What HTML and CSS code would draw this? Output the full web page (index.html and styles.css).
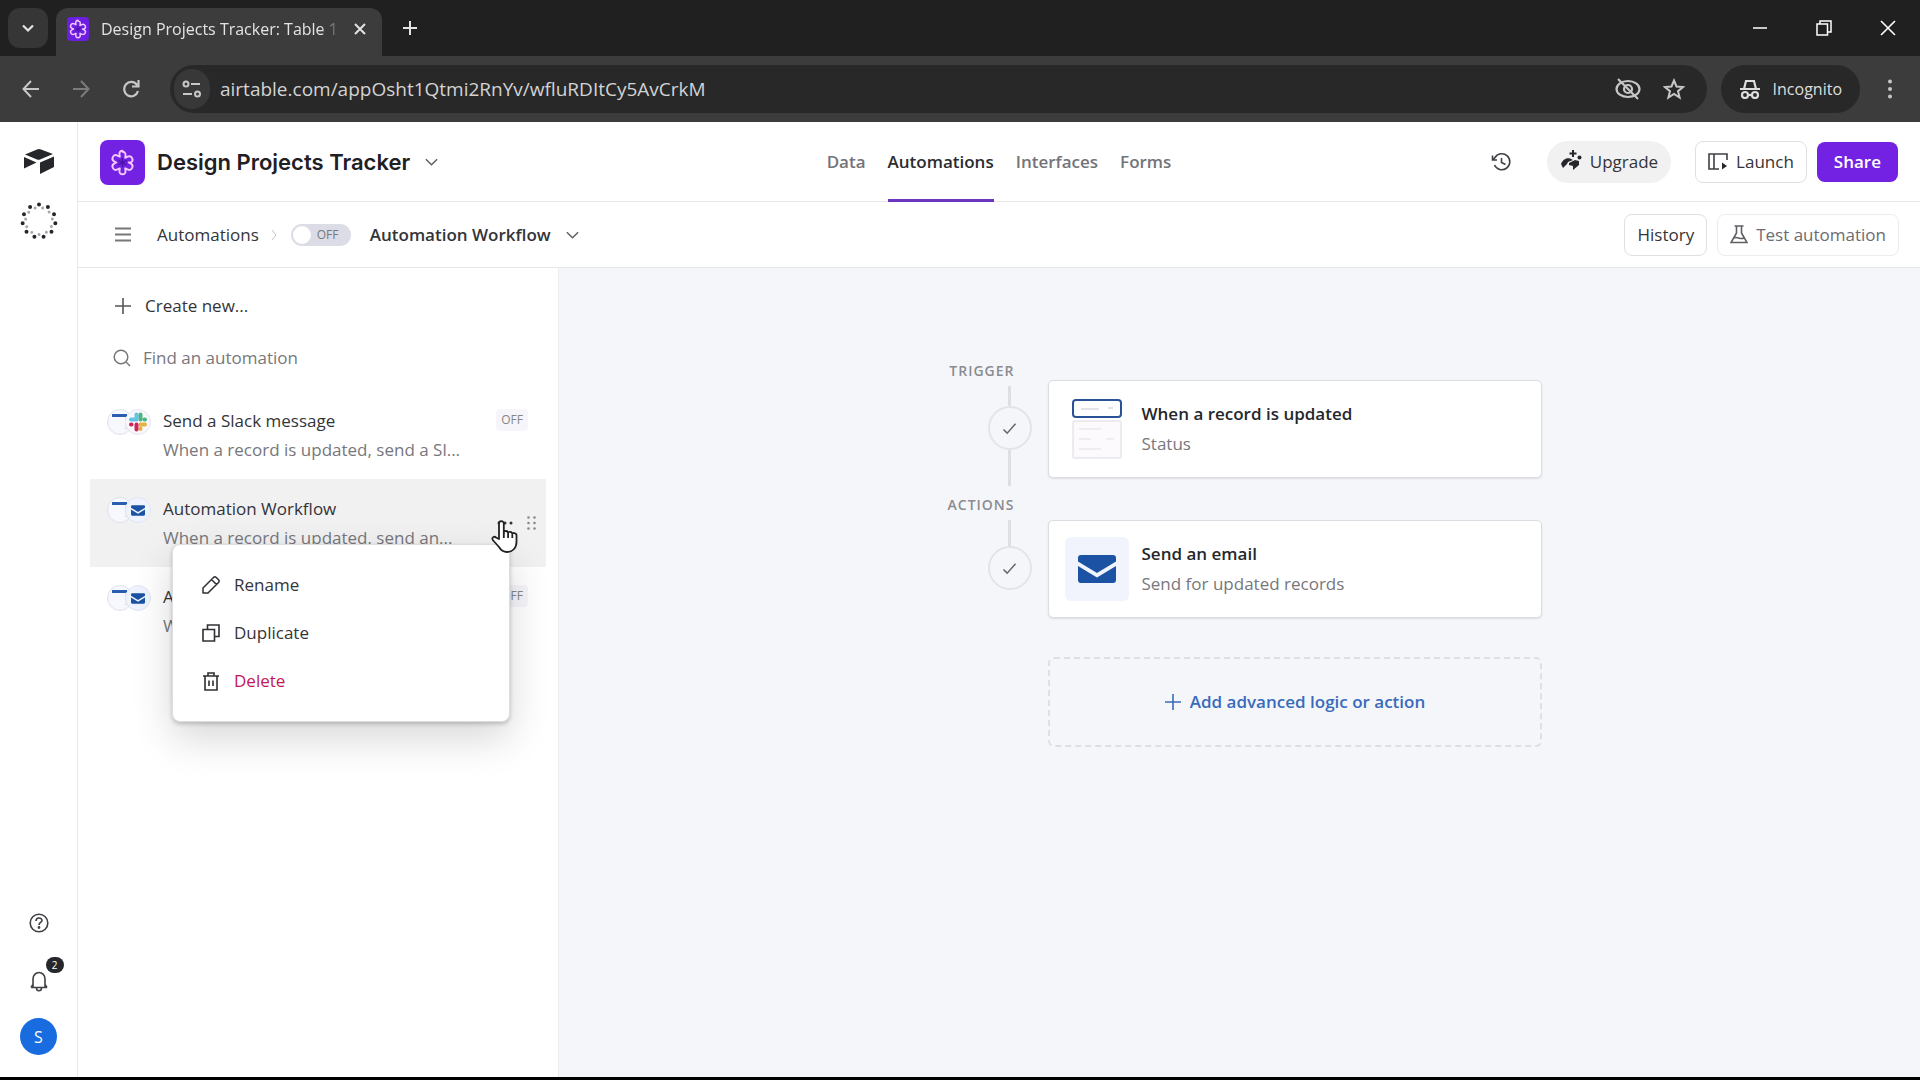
FILE: index.html
```html
<!DOCTYPE html>
<html lang="en">
<head>
    <meta charset="utf-8">
    <title>Design Projects Tracker: Table 1</title>
    <link rel="stylesheet" href="styles.css">
</head>
<body>
    <!-- Icons used more than once -->
    <svg class="sprite" aria-hidden="true">
        <symbol id="flower" viewBox="0 0 24 24">
            <path d="M12 2.500c1.800 0 2.900 1.300 2.700 3l-.3 2.300 2.100-1c1.600-.7 3.200-.2 4 1.200s.4 3.100-1 4L17.500 12l2 1c1.400.9 1.800 2.600 1 4s-2.400 1.900-4 1.200l-2.100-1 .3 2.300c.2 1.700-.9 3-2.700 3s-2.900-1.300-2.700-3l.3-2.300-2.100 1c-1.600.7-3.200.2-4-1.200s-.4-3.100 1-4l2-1-2-1c-1.400-.9-1.800-2.600-1-4s2.400-1.900 4-1.200l2.100 1-.3-2.300c-.2-1.700.9-3 2.700-3z" fill="none" stroke="#f3c9ff" stroke-width="1.700" stroke-linejoin="round"/>
            <path d="M12 8v8M8.500 10l7 4M15.500 10l-7 4" stroke="#4a12a8" stroke-width="1.200" fill="none"/>
        </symbol>
        <symbol id="chevron" viewBox="0 0 16 10">
            <path d="M2 2l6 6 6-6" fill="none" stroke="currentColor" stroke-width="1.600"/>
        </symbol>
        <symbol id="plus" viewBox="0 0 18 18">
            <path d="M9 1v16M1 9h16" fill="none" stroke="currentColor" stroke-width="1.600"/>
        </symbol>
        <symbol id="envelope" viewBox="0 0 38 28">
            <path d="M3 0h32a3 3 0 0 1 3 3v3.500L19 18 0 6.500V3a3 3 0 0 1 3-3z" fill="#1b52a4"/>
            <path d="M0 11l19 11.500L38 11v14a3 3 0 0 1-3 3H3a3 3 0 0 1-3-3z" fill="#1b52a4"/>
        </symbol>
        <symbol id="check" viewBox="0 0 16 14">
            <path d="M1.500 8l4 4 9-10" fill="none" stroke="currentColor" stroke-width="1.600"/>
        </symbol>
        <symbol id="record" viewBox="0 0 26 26">
            <circle cx="13" cy="13" r="12.500" fill="#f7f8fd" stroke="#e0e1ea"/>
            <path d="M5 5h15v3H5z" fill="#2a5db0"/>
            <path d="M19 8v13" stroke="#d5daea"/>
        </symbol>
        <symbol id="mail" viewBox="0 0 26 26">
            <circle cx="13" cy="13" r="12.500" fill="#eef3fd" stroke="#e0e5f2"/>
            <use href="#envelope" x="6" y="8" width="14" height="11"/>
        </symbol>
    </svg>

    <!-- Browser window -->
    <div class="tab-strip">
        <button class="tab-search" aria-label="Search tabs"><svg width="14" height="9" viewBox="0 0 14 9"><path d="M2 1.500l5 5 5-5" fill="none" stroke="currentColor" stroke-width="2.200"/></svg></button>
        <div class="browser-tab">
            <span class="favicon"><svg width="20" height="20"><use href="#flower"/></svg></span>
            <span class="tab-title">Design Projects Tracker: Table 1</span>
            <button class="tab-close" aria-label="Close tab">
                <svg width="12" height="12" viewBox="0 0 12 12"><path d="M1 1l10 10M11 1L1 11" stroke="currentColor" stroke-width="2"/></svg>
            </button>
        </div>
        <button class="new-tab" aria-label="New tab">
            <svg width="14" height="14" viewBox="0 0 14 14"><path d="M7 0v14M0 7h14" stroke="currentColor" stroke-width="2"/></svg>
        </button>
        <div class="window-buttons">
            <button aria-label="Minimize"><svg width="14" height="14" viewBox="0 0 14 14"><path d="M0 7h14" stroke="currentColor" stroke-width="1.500"/></svg></button>
            <button aria-label="Restore"><svg width="16" height="16" viewBox="0 0 16 16" fill="none" stroke="currentColor" stroke-width="1.500"><path d="M1 4h10.500v11H1zM4 4V1h11v11h-3.500"/></svg></button>
            <button aria-label="Close"><svg width="16" height="16" viewBox="0 0 16 16"><path d="M1 1l14 14M15 1L1 15" stroke="currentColor" stroke-width="1.600"/></svg></button>
        </div>
    </div>
    <div class="toolbar">
        <button class="nav-button" aria-label="Back"><svg width="18" height="18" viewBox="0 0 18 18" fill="none" stroke="currentColor" stroke-width="2"><path d="M17 9H2M9 1L1.500 9 9 17"/></svg></button>
        <button class="nav-button dim" aria-label="Forward"><svg width="18" height="18" viewBox="0 0 18 18" fill="none" stroke="currentColor" stroke-width="2"><path d="M1 9h15M9 1l7.500 8L9 17"/></svg></button>
        <button class="nav-button" aria-label="Reload"><svg width="18" height="18" viewBox="0 0 18 18" fill="none" stroke="currentColor" stroke-width="2.200"><path d="M16 11a7 7.200 0 1 1-1-6l1 1.500M16.500 0v6.500H10"/></svg></button>
        <div class="address-bar">
            <button class="site-info" aria-label="Site information">
                <svg width="20" height="18" viewBox="0 0 20 18" fill="none" stroke="currentColor" stroke-width="2"><circle cx="4" cy="4" r="2.500"/><path d="M9 4h9M1 14h9"/><circle cx="15.500" cy="14" r="2.500"/></svg>
            </button>
            <input class="url" type="text" aria-label="Address" value="airtable.com/appOsht1Qtmi2RnYv/wfluRDItCy5AvCrkM">
            <button aria-label="Third-party cookies blocked">
                <svg width="26" height="22" viewBox="0 0 26 22" fill="none" stroke="currentColor" stroke-width="2.200"><ellipse cx="13" cy="11" rx="11.500" ry="8"/><circle cx="13" cy="11" r="4"/><path d="M3 1l20 20"/></svg>
            </button>
            <button aria-label="Bookmark">
                <svg width="22" height="22" viewBox="0 0 22 22" fill="none" stroke="currentColor" stroke-width="2"><path d="M11 2.500l2.500 6 6.500.5-5 4.200 1.600 6.300L11 16l-5.600 3.500L7 13.200 2 9l6.500-.5z"/></svg>
            </button>
        </div>
        <button class="incognito">
            <svg width="22" height="20" viewBox="0 0 22 20" fill="none" stroke="currentColor" stroke-width="2.200"><path d="M1 10h20M5 10l2-8h8l2 8"/><circle cx="6" cy="16" r="3"/><circle cx="16" cy="16" r="3"/><path d="M9 16h4"/></svg>
            Incognito
        </button>
        <button class="more" aria-label="Menu"><svg width="6" height="20" viewBox="0 0 6 20" fill="currentColor"><circle cx="3" cy="2.500" r="2"/><circle cx="3" cy="10" r="2"/><circle cx="3" cy="17.500" r="2"/></svg></button>
    </div>

    <div class="app">
        <nav class="rail" aria-label="Workspace">
            <a href="#" aria-label="Home">
                <svg width="32" height="27" viewBox="0 0 32 27" fill="#26272b"><path d="M14 1.500a5 5 0 0 1 4 0L30 6 17 11.500a4 4 0 0 1-3 0L2 6.500z"/><path d="M17 14.500l14-6V19l-14 7z"/><path d="M1 9l12.500 5.500L1 20.500z"/></svg>
            </a>
            <span class="spinner">
                <svg width="38" height="38" viewBox="0 0 38 38" fill="none" stroke-linecap="round">
                    <circle cx="19" cy="19" r="16.500" stroke="#26272b" stroke-width="4" pathLength="110" stroke-dasharray="0 10" transform="rotate(-90 19 19)"/>
                    <circle cx="19" cy="19" r="13.500" stroke="#a8a8ac" stroke-width="3" pathLength="110" stroke-dasharray="0 10" transform="rotate(-74 19 19)"/>
                </svg>
            </span>
            <div class="rail-bottom">
                <button aria-label="Help">
                    <svg width="20" height="20" viewBox="0 0 20 20" fill="none" stroke="#404045" stroke-width="1.600"><circle cx="10" cy="10" r="8.800"/><path d="M7 8c0-4 6-4 6-.5 0 2-3 2-3 4.500"/><circle cx="10" cy="14.500" r=".6" fill="#404045"/></svg>
                </button>
                <button class="bell" aria-label="Notifications">
                    <svg width="18" height="21" viewBox="0 0 18 21" fill="none" stroke="#404045" stroke-width="1.600"><path d="M3 16V8a6 6.500 0 0 1 12 0v8M1 16.500l2-3M17 16.500l-2-3M1 16.500h16M6.500 17a2.500 2.800 0 0 0 5 0"/></svg>
                    <span class="count">2</span>
                </button>
                <button class="avatar">S</button>
            </div>
        </nav>

        <div class="workspace">
            <header class="base-header">
                <div class="base-name">
                    <span class="base-icon"><svg width="27" height="27"><use href="#flower"/></svg></span>
                    <h1>Design Projects Tracker</h1>
                    <svg class="caret" width="15" height="10"><use href="#chevron"/></svg>
                </div>
                <nav class="base-tabs" aria-label="Base">
                    <a href="#">Data</a>
                    <a href="#" class="active">Automations</a>
                    <a href="#">Interfaces</a>
                    <a href="#">Forms</a>
                </nav>
                <div class="base-actions">
                    <button class="clock" aria-label="Base history">
                        <svg width="20" height="20" viewBox="0 0 20 20" fill="none" stroke="#404045" stroke-width="1.600"><path d="M3.500 13A8 8 0 1 0 4 5.500L2 8M1.500 3.500V8H6M10.500 6v4.500l4 2"/></svg>
                    </button>
                    <button class="upgrade">
                        <svg width="22" height="26" viewBox="0 0 22 26" fill="#26272b"><path d="M1 15c1.500-4 5-6.500 9-5.500l3 1.500-5 2-1 2-4 4z"/><path d="M9 14l6-3 4 1v4l-6 5v-4l-4-1z"/><path d="M13 1v7M9.500 4.500h7" stroke="#26272b" stroke-width="2"/><circle cx="19.500" cy="8.500" r="2"/></svg>
                        Upgrade
                    </button>
                    <button class="outlined">
                        <svg width="20" height="18" viewBox="0 0 20 18" fill="none" stroke="#404045" stroke-width="1.600"><path d="M19 7V1H1v15h10M6 1v15"/><path d="M14 9.500l5 3.500-5 3.500z" fill="#26272b" stroke="none"/></svg>
                        Launch
                    </button>
                    <button class="share">Share</button>
                </div>
            </header>

            <div class="sub-header">
                <button class="hamburger" aria-label="Toggle automation list">
                    <svg width="16" height="15" viewBox="0 0 16 15"><path d="M0 1.500h16M0 7.500h16M0 13.500h16" stroke="#77777c" stroke-width="2"/></svg>
                </button>
                <a class="crumb" href="#">Automations</a>
                <svg class="crumb-sep" width="6" height="12" viewBox="0 0 6 12"><path d="M1 1l4 5-4 5" fill="none" stroke="#c4c4ca"/></svg>
                <label class="toggle">
                    <input type="checkbox" aria-label="Automation enabled">
                    <span class="knob"></span>OFF
                </label>
                <h2>Automation Workflow</h2>
                <svg class="caret" width="15" height="10"><use href="#chevron"/></svg>
                <div class="sub-actions">
                    <button class="outlined">History</button>
                    <button class="outlined muted">
                        <svg width="18" height="19" viewBox="0 0 18 19" fill="none" stroke="#606065" stroke-width="1.600"><path d="M4.500 1h9M6.500 1v7L1 17.500h16L11.500 8V1M4 13c3-2 6 2 10 0"/></svg>
                        Test automation
                    </button>
                </div>
            </div>

            <div class="content">
                <aside class="sidebar">
                    <button class="create">
                        <svg width="18" height="18"><use href="#plus"/></svg>
                        Create new...
                    </button>
                    <label class="search">
                        <svg width="18" height="18" viewBox="0 0 18 18" fill="none" stroke="#77777c" stroke-width="1.500"><circle cx="8" cy="8" r="6.800"/><path d="M13 13l4 4"/></svg>
                        <input type="text" placeholder="Find an automation" aria-label="Find an automation">
                    </label>
                    <ul class="automations">
                        <li class="automation">
                            <span class="icons">
                                <svg width="26" height="26"><use href="#record"/></svg>
                                <svg width="26" height="26" viewBox="0 0 26 26" fill="none" stroke-width="4" stroke-linecap="round">
                                    <circle cx="13" cy="13" r="12.500" fill="#f8f8fc" stroke="#e4e5ee" stroke-width="1"/>
                                    <path d="M6 10.500h4M11.500 5.500v5" stroke="#62c4e6"/>
                                    <path d="M15.500 10.500v-5M20 10.500h-.5" stroke="#4cb583"/>
                                    <path d="M15.500 15.500H20M15.500 20v-.5" stroke="#e2b243"/>
                                    <path d="M11.500 15.500v5M6.500 15.500H6" stroke="#cf2558"/>
                                </svg>
                            </span>
                            <div class="summary">
                                <h3>Send a Slack message</h3>
                                <p>When a record is updated, send a Sl...</p>
                            </div>
                            <span class="badge">OFF</span>
                        </li>
                        <li class="automation selected">
                            <span class="icons">
                                <svg width="26" height="26"><use href="#record"/></svg>
                                <svg width="26" height="26"><use href="#mail"/></svg>
                            </span>
                            <div class="summary">
                                <h3>Automation Workflow</h3>
                                <p>When a record is updated, send an...</p>
                            </div>
                            <span class="row-tools">
                                <button aria-label="More options"><svg width="16" height="4" viewBox="0 0 16 4" fill="#333"><circle cx="2" cy="2" r="1.500"/><circle cx="8" cy="2" r="1.500"/><circle cx="14" cy="2" r="1.500"/></svg></button>
                                <svg width="9" height="14" viewBox="0 0 9 14" fill="#8a8a8f"><circle cx="1.500" cy="1.500" r="1.300"/><circle cx="7.500" cy="1.500" r="1.300"/><circle cx="1.500" cy="7" r="1.300"/><circle cx="7.500" cy="7" r="1.300"/><circle cx="1.500" cy="12.500" r="1.300"/><circle cx="7.500" cy="12.500" r="1.300"/></svg>
                            </span>
                            <!-- Options menu -->
                            <div class="menu" role="menu">
                                <button role="menuitem">
                                    <svg width="18" height="18" viewBox="0 0 18 18" fill="none" stroke="#303034" stroke-width="1.500" stroke-linejoin="round"><path d="M1 17v-5L11.500 1.500a2 2 0 0 1 2.800 0l2.200 2.200a2 2 0 0 1 0 2.800L6 17zM9.500 3.500l5 5"/></svg>
                                    Rename
                                </button>
                                <button role="menuitem">
                                    <svg width="18" height="18" viewBox="0 0 18 18" fill="none" stroke="#303034" stroke-width="1.600"><path d="M1 5.500h11.500V17H1zM5.500 5.500V1H17v11.500h-4.500"/></svg>
                                    Duplicate
                                </button>
                                <button role="menuitem" class="danger">
                                    <svg width="18" height="19" viewBox="0 0 18 19" fill="none" stroke="#303034" stroke-width="1.600"><path d="M1 4h16M3 4v14h12V4M6 4V1h6v3M7 8.500V14M11 8.500V14"/></svg>
                                    Delete
                                </button>
                            </div>
                            <svg class="pointer" width="27" height="34" viewBox="0 0 27 34" fill="#fff" stroke="#222" stroke-width="1.800" stroke-linejoin="round"><path d="M8 20V4.500a2.400 2.400 0 0 1 4.800 0V14c0-3 4.300-2.500 4.300.5 0-2.500 4.200-2.300 4.200.8 0-2 4.200-1.800 4.200 1.200V23c0 6-4 10-9.500 10-4 0-6-1.500-8-5L1.800 21c-1.300-2.500 1.400-4.300 3.200-2.500z"/><path d="M12.800 14v5M17.100 15v4M21.300 16v3"/></svg>
                        </li>
                        <li class="automation">
                            <span class="icons">
                                <svg width="26" height="26"><use href="#record"/></svg>
                                <svg width="26" height="26"><use href="#mail"/></svg>
                            </span>
                            <div class="summary">
                                <h3>A</h3>
                                <p>W</p>
                            </div>
                            <span class="badge">OFF</span>
                        </li>
                    </ul>
                </aside>

                <main class="canvas">
                    <section class="step trigger">
                        <div class="marker">
                            <span class="step-label">Trigger</span>
                            <span class="line"></span>
                            <span class="status"><svg width="15" height="13"><use href="#check"/></svg></span>
                            <span class="line after"></span>
                        </div>
                        <div class="card">
                            <span class="card-icon">
                                <svg width="50" height="60" viewBox="0 0 50 60" fill="#fff"><rect x="1" y="1" width="48" height="17" rx="3" stroke="#2a5298" stroke-width="2"/><path d="M9 10h18M36 9h5" stroke="#e3e3ea" stroke-width="2"/><rect x="1" y="22" width="48" height="37" rx="2" fill="#fcfafc" stroke="#ebebf0" stroke-width="2"/><path d="M7 30h22M7 40h12M7 50h22M34 40h8" stroke="#efedf2" stroke-width="2"/></svg>
                            </span>
                            <div>
                                <h3>When a record is updated</h3>
                                <p>Status</p>
                            </div>
                        </div>
                    </section>
                    <section class="step actions">
                        <div class="marker">
                            <span class="step-label">Actions</span>
                            <span class="line"></span>
                            <span class="status"><svg width="15" height="13"><use href="#check"/></svg></span>
                        </div>
                        <div class="card">
                            <span class="card-icon tinted"><svg width="38" height="28"><use href="#envelope"/></svg></span>
                            <div>
                                <h3>Send an email</h3>
                                <p>Send for updated records</p>
                            </div>
                        </div>
                    </section>
                    <button class="add-step">
                        <svg width="18" height="18"><use href="#plus"/></svg>
                        Add advanced logic or action
                    </button>
                </main>
            </div>
        </div>
    </div>
</body>
</html>
```

FILE: styles.css
```css
* {
    box-sizing: border-box;
}

body {
    margin: 0;
    height: 100vh;
    display: flex;
    flex-direction: column;
    border-bottom: 3px solid #000;
    background: #fff;
    color: #333438;
    font-family: "Open Sans", "Noto Sans", sans-serif;
    font-size: 17px;
    line-height: 24px;
    overflow: hidden;
}

h1, h2, h3, p, ul {
    margin: 0;
    padding: 0;
    font-size: inherit;
    font-weight: inherit;
}

a {
    color: inherit;
    text-decoration: none;
}

button, input {
    margin: 0;
    padding: 0;
    border: none;
    background: none;
    color: inherit;
    font: inherit;
}

button {
    display: flex;
    align-items: center;
    justify-content: center;
    white-space: nowrap;
    cursor: pointer;
}

svg {
    display: block;
    flex-shrink: 0;
}

.sprite {
    display: none;
}

.caret {
    color: #606065;
}

/* Browser window */
.tab-strip {
    display: flex;
    align-items: center;
    height: 56px;
    padding-left: 8px;
    flex-shrink: 0;
    background: #202020;
    color: #e3e3e3;
}

.tab-search {
    width: 40px;
    height: 40px;
    border-radius: 12px;
    background: #363636;
}

.browser-tab {
    display: flex;
    align-items: center;
    align-self: flex-end;
    width: 326px;
    height: 48px;
    margin-left: 8px;
    padding: 0 16px 6px 11px;
    border-radius: 12px 12px 0 0;
    background: #3c3c3c;
    font-size: 16px;
}

.favicon {
    display: flex;
    align-items: center;
    justify-content: center;
    width: 22px;
    height: 24px;
    border-radius: 4px;
    background: #6d1fe0;
}

.tab-title {
    flex: 1;
    margin-left: 12px;
    white-space: nowrap;
    -webkit-mask-image: linear-gradient(to right, #000 92%, transparent);
    mask-image: linear-gradient(to right, #000 92%, transparent);
}

.tab-close {
    margin-left: 14px;
}

.new-tab {
    margin-left: 21px;
}

.window-buttons {
    display: flex;
    margin-left: auto;
}

.window-buttons button {
    width: 64px;
    height: 56px;
    color: #fff;
}

.toolbar {
    display: flex;
    align-items: center;
    height: 66px;
    padding: 0 6px;
    flex-shrink: 0;
    background: #3c3c3c;
    color: #c7c7c7;
}

.nav-button {
    width: 50px;
    height: 40px;
}

.dim {
    color: #7c7c7c;
}

.address-bar {
    flex: 1;
    display: flex;
    align-items: center;
    gap: 22px;
    height: 48px;
    margin-left: 14px;
    padding: 0 22px 0 4px;
    border-radius: 24px;
    background: #282828;
}

.site-info {
    width: 36px;
    height: 40px;
    border-radius: 20px;
    background: #383838;
}

.url {
    flex: 1;
    margin-left: -12px;
    color: #d3d3d3;
    font-size: 19px;
}

.incognito {
    gap: 12px;
    height: 48px;
    margin-left: 14px;
    padding: 0 18px;
    border-radius: 24px;
    background: #282828;
    color: #dedede;
    font-size: 16px;
}

.more {
    width: 48px;
    height: 40px;
    margin-left: 6px;
}

/* App frame */
.app {
    flex: 1;
    display: flex;
    min-height: 0;
}

.rail {
    display: flex;
    flex-direction: column;
    align-items: center;
    width: 78px;
    padding: 26px 0 22px;
    border-right: 1px solid #e8e8ea;
}

.spinner {
    margin-top: 27px;
}

.rail-bottom {
    display: flex;
    flex-direction: column;
    align-items: center;
    margin-top: auto;
}

.bell {
    position: relative;
    margin: 38px 0 26px;
}

.count {
    position: absolute;
    top: -14px;
    left: 16px;
    width: 18px;
    height: 16px;
    border-radius: 8px;
    background: #26272b;
    color: #fff;
    font-size: 10px;
    line-height: 16px;
}

.avatar {
    width: 37px;
    height: 37px;
    border-radius: 50%;
    background: #186ce0;
    color: #fff;
    font-size: 16px;
}

.workspace {
    flex: 1;
    display: flex;
    flex-direction: column;
    min-width: 0;
}

.base-header {
    display: grid;
    grid-template-columns: 1fr auto 1fr;
    height: 80px;
    padding: 0 22px;
    border-bottom: 1px solid #e6e6e8;
}

.base-name {
    display: flex;
    align-items: center;
}

.base-icon {
    display: flex;
    align-items: center;
    justify-content: center;
    width: 45px;
    height: 45px;
    border-radius: 8px;
    background: #7321e2;
}

.base-name h1 {
    margin: 0 14px 0 12px;
    color: #1f2024;
    font-family: Inter, sans-serif;
    font-size: 22px;
    font-weight: 600;
}

.base-tabs {
    display: flex;
    gap: 22px;
    color: #737479;
    font-weight: 600;
}

.base-tabs a {
    display: flex;
    align-items: center;
    height: 80px;
    border-bottom: 3px solid transparent;
    border-top: 3px solid transparent;
}

.base-tabs .active {
    border-bottom-color: #6b35bd;
    color: #2b2c30;
}

.base-actions {
    display: flex;
    align-items: center;
    justify-content: flex-end;
}

.clock {
    margin-right: 36px;
}

.upgrade {
    gap: 8px;
    height: 42px;
    margin-right: 24px;
    padding: 0 13px;
    border-radius: 21px;
    background: #f1f1f2;
}

.outlined {
    gap: 8px;
    height: 42px;
    padding: 0 12px;
    border: 1px solid #e0e0e4;
    border-radius: 8px;
    background: #fff;
}

.muted {
    border-color: #ececef;
    color: #6c6c72;
}

.share {
    height: 40px;
    margin-left: 10px;
    padding: 0 17px;
    border-radius: 8px;
    background: #7321e2;
    color: #fff;
    font-weight: 600;
}

.sub-header {
    display: flex;
    align-items: center;
    height: 66px;
    padding: 0 21px 0 37px;
    border-bottom: 1px solid #e6e6e8;
}

.crumb {
    margin-left: 26px;
}

.crumb-sep {
    margin: 0 14px 0 12px;
}

.toggle {
    position: relative;
    display: flex;
    align-items: center;
    gap: 6px;
    width: 60px;
    height: 22px;
    padding: 0 2px;
    border-radius: 11px;
    background: #dcdce6;
    color: #77777c;
    font-size: 12px;
}

.toggle input {
    position: absolute;
    inset: 0;
    width: 100%;
    height: 100%;
    opacity: 0;
}

.knob {
    width: 18px;
    height: 18px;
    border-radius: 50%;
    background: #fff;
}

.sub-header h2 {
    margin: 0 14px 0 19px;
    font-weight: 600;
}

.sub-actions {
    display: flex;
    gap: 10px;
    margin-left: auto;
}

.content {
    flex: 1;
    display: flex;
    min-height: 0;
}

/* Automation list */
.sidebar {
    width: 481px;
    padding: 17px 12px;
    border-right: 1px solid #ececef;
}

.create {
    gap: 13px;
    height: 42px;
    padding: 0 24px;
}

.create svg {
    color: #55555a;
}

.search {
    display: flex;
    align-items: center;
    gap: 12px;
    height: 62px;
    padding: 0 23px;
}

.search input {
    flex: 1;
}

.search input::placeholder {
    color: #77777c;
    opacity: 1;
}

.automations {
    margin-top: 2px;
    list-style: none;
}

.automation {
    position: relative;
    display: flex;
    height: 88px;
    padding: 18px 18px 18px 17px;
}

.selected {
    z-index: 1;
    background: #f1f1f2;
}

.icons {
    display: flex;
}

.icons svg + svg {
    margin-left: -8px;
}

.summary {
    flex: 1;
    margin-left: 12px;
    white-space: nowrap;
}

.summary p {
    margin-top: 5px;
    color: #77777c;
}

.badge {
    height: 22px;
    padding: 0 5px;
    border-radius: 4px;
    background: #f5f5fa;
    color: #85858a;
    font-size: 12px;
    line-height: 22px;
}

.row-tools {
    display: flex;
    align-items: center;
    gap: 14px;
    margin-right: -8px;
}

.menu {
    position: absolute;
    top: 65px;
    left: 82px;
    width: 338px;
    padding: 16px 12px;
    border: 1px solid #dedee0;
    border-radius: 8px;
    background: #fff;
    box-shadow: 0 2px 4px rgba(0, 0, 0, 0.2), 0 16px 40px rgba(0, 0, 0, 0.16);
}

.menu button {
    justify-content: flex-start;
    gap: 14px;
    width: 100%;
    height: 48px;
    padding: 0 17px;
}

.menu .danger {
    color: #c2185b;
}

.pointer {
    position: absolute;
    top: 40px;
    left: 401px;
}

/* Workflow canvas */
.canvas {
    flex: 1;
    display: flex;
    flex-direction: column;
    align-items: center;
    padding: 94px 0 0 4px;
    background: #f5f6fa;
}

.step {
    display: flex;
    gap: 16px;
    width: 600px;
}

.marker {
    display: flex;
    flex-direction: column;
    align-items: flex-end;
    width: 90px;
}

.step-label {
    margin: 0 17px 6px 0;
    color: #8b8c91;
    font-size: 14px;
    font-weight: 600;
    letter-spacing: 1px;
    line-height: 18px;
    text-transform: uppercase;
}

.line {
    width: 3px;
    height: 20px;
    margin-right: 21px;
    background: #dedfe4;
}

.after {
    height: 36px;
    margin-bottom: 10px;
}

.actions .line {
    height: 26px;
}

.status {
    display: flex;
    align-items: center;
    justify-content: center;
    width: 44px;
    height: 44px;
    border: 2px solid #e3e4e8;
    border-radius: 50%;
    color: #66676d;
}

.card {
    flex: 1;
    display: flex;
    align-items: center;
    gap: 13px;
    height: 98px;
    margin-top: 18px;
    padding: 0 16px;
    border: 1px solid #dcdde2;
    border-radius: 5px;
    background: #fff;
    box-shadow: 0 1px 2px rgba(0, 0, 0, 0.1);
}

.actions .card {
    margin-top: 24px;
}

.card-icon {
    display: flex;
    align-items: center;
    justify-content: center;
    width: 64px;
    height: 64px;
    border-radius: 6px;
}

.tinted {
    background: #f1f4fd;
}

.card h3 {
    margin-bottom: 6px;
    color: #26272b;
    font-weight: 600;
}

.card p {
    color: #77777c;
}

.add-step {
    gap: 8px;
    width: 494px;
    height: 90px;
    margin: 39px 0 0 106px;
    border: 2px dashed #dedfe3;
    border-radius: 6px;
    color: #386bba;
    font-weight: 600;
}
```
